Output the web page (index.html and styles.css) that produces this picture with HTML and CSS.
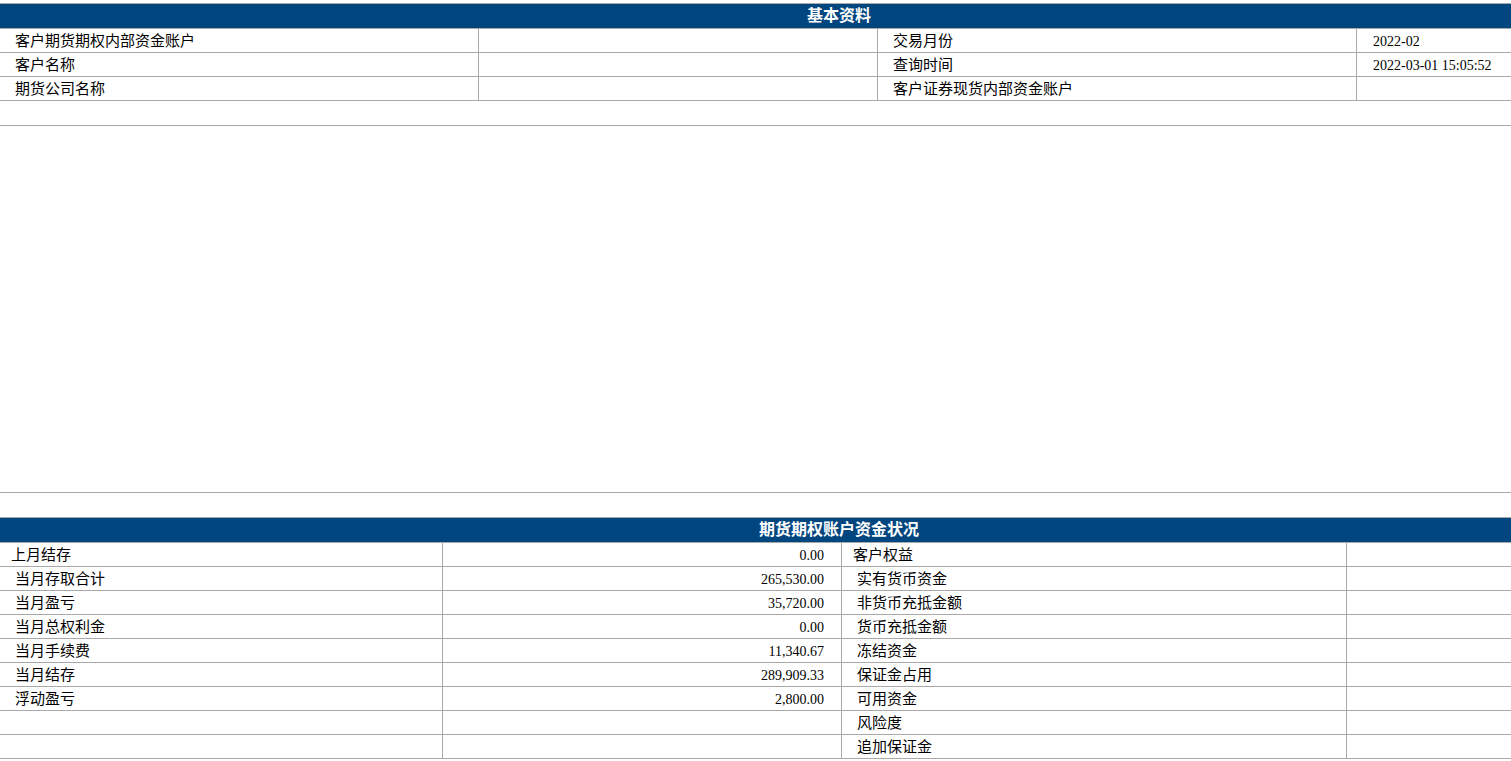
FILE: index.html
```html
<!DOCTYPE html>
<html lang="zh-CN">
<head>
<meta charset="utf-8">
<title>资金状况</title>
<link rel="stylesheet" href="styles.css">
</head>
<body>
<div class="page">
  <section class="sheet basic">
    <div class="title">基本资料</div>
    <div class="row">
      <div class="cell lbl">客户期货期权内部资金账户</div>
      <div class="cell"></div>
      <div class="cell lbl">交易月份</div>
      <div class="cell val">2022-02</div>
    </div>
    <div class="row">
      <div class="cell lbl">客户名称</div>
      <div class="cell"></div>
      <div class="cell lbl">查询时间</div>
      <div class="cell val">2022-03-01 15:05:52</div>
    </div>
    <div class="row">
      <div class="cell lbl">期货公司名称</div>
      <div class="cell"></div>
      <div class="cell lbl">客户证券现货内部资金账户</div>
      <div class="cell val"></div>
    </div>
    <div class="blank"></div>
  </section>

  <div class="gap"></div>

  <section class="sheet funds">
    <div class="blank top"></div>
    <div class="title">期货期权账户资金状况</div>
    <div class="row">
      <div class="cell lbl first">上月结存</div>
      <div class="cell num">0.00</div>
      <div class="cell lbl first">客户权益</div>
      <div class="cell"></div>
    </div>
    <div class="row">
      <div class="cell lbl">当月存取合计</div>
      <div class="cell num">265,530.00</div>
      <div class="cell lbl">实有货币资金</div>
      <div class="cell"></div>
    </div>
    <div class="row">
      <div class="cell lbl">当月盈亏</div>
      <div class="cell num">35,720.00</div>
      <div class="cell lbl">非货币充抵金额</div>
      <div class="cell"></div>
    </div>
    <div class="row">
      <div class="cell lbl">当月总权利金</div>
      <div class="cell num">0.00</div>
      <div class="cell lbl">货币充抵金额</div>
      <div class="cell"></div>
    </div>
    <div class="row">
      <div class="cell lbl">当月手续费</div>
      <div class="cell num">11,340.67</div>
      <div class="cell lbl">冻结资金</div>
      <div class="cell"></div>
    </div>
    <div class="row">
      <div class="cell lbl">当月结存</div>
      <div class="cell num">289,909.33</div>
      <div class="cell lbl">保证金占用</div>
      <div class="cell"></div>
    </div>
    <div class="row">
      <div class="cell lbl">浮动盈亏</div>
      <div class="cell num">2,800.00</div>
      <div class="cell lbl">可用资金</div>
      <div class="cell"></div>
    </div>
    <div class="row">
      <div class="cell lbl"></div>
      <div class="cell num"></div>
      <div class="cell lbl">风险度</div>
      <div class="cell"></div>
    </div>
    <div class="row">
      <div class="cell lbl"></div>
      <div class="cell num"></div>
      <div class="cell lbl">追加保证金</div>
      <div class="cell"></div>
    </div>
  </section>
</div>
</body>
</html>
```

FILE: styles.css
```css
html, body {
  margin: 0;
  padding: 0;
  background: #ffffff;
  overflow: hidden;
}

.page {
  width: 1511px;
  height: 761px;
  overflow: hidden;
  padding-top: 3px;
  box-sizing: border-box;
  font-family: "Liberation Serif", "Noto Sans CJK SC", serif;
  color: #000000;
}

.sheet {
  width: 1678px;
}

.title {
  box-sizing: border-box;
  height: 26px;
  border-top: 1px solid #a9a9a9;
  border-bottom: 1px solid #a9a9a9;
  background: #02467f;
  color: #ffffff;
  font-family: "Noto Sans CJK SC", sans-serif;
  font-weight: 700;
  font-size: 16px;
  line-height: 21px;
  text-align: center;
}

.funds .title {
  border-top: none;
  height: 25px;
}

.row {
  display: grid;
  height: 24px;
  box-sizing: border-box;
  border-bottom: 1px solid #a9a9a9;
}

.basic .row {
  grid-template-columns: 479px 399px 479px 1fr;
}

.funds .row {
  grid-template-columns: 443px 399px 505px 1fr;
}

.cell {
  display: flex;
  align-items: center;
  box-sizing: border-box;
  border-right: 1px solid #a9a9a9;
  white-space: nowrap;
  overflow: hidden;
}

.cell:last-child {
  border-right: none;
}

.lbl {
  font-family: "Noto Sans CJK SC", sans-serif;
  font-size: 15px;
  padding-left: 15px;
  padding-bottom: 2px;
}

.lbl.first {
  padding-left: 11px;
}

.val {
  font-size: 14px;
  padding-left: 16px;
  padding-top: 2px;
}

.num {
  font-size: 14px;
  justify-content: flex-end;
  padding-right: 17px;
  padding-top: 2px;
}

.blank {
  height: 25px;
  box-sizing: border-box;
  border-bottom: 1px solid #a9a9a9;
}

.blank.top {
  border-top: 1px solid #a9a9a9;
  height: 26px;
}

.gap {
  height: 366px;
}
```
